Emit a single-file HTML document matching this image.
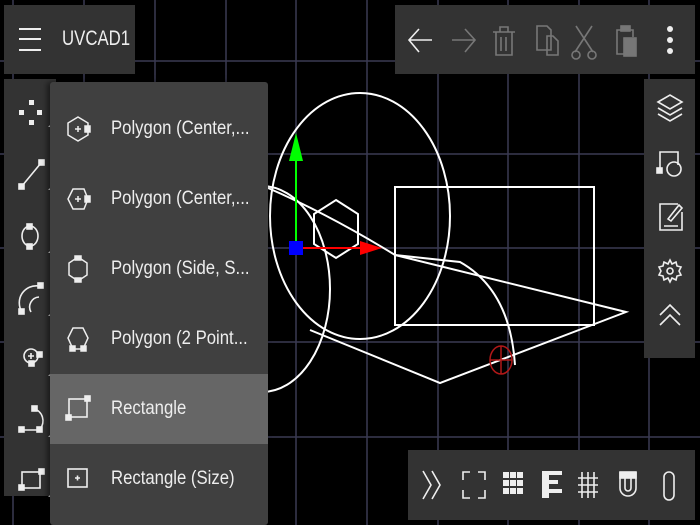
<!DOCTYPE html>
<html><head><style>
body{margin:0;width:700px;height:525px;background:#000;overflow:hidden;position:relative;font-family:"Liberation Sans",sans-serif}
.p{position:absolute;background:#333}
.menu{position:absolute;left:50px;top:82px;width:218px;height:443px;background:#404040;border-radius:3px;box-shadow:-3px 0 6px rgba(0,0,0,.5)}
.it{position:absolute;left:0;width:218px;height:70px;color:#eee;font-size:19px;line-height:70px}
.it span{position:absolute;left:61px;white-space:nowrap;transform:scaleX(.88);transform-origin:left}
.it svg{position:absolute;left:16px;top:22px}
svg{overflow:visible}
</style></head><body>
<svg width="700" height="525" style="position:absolute;left:0;top:0">
<g stroke="#3a3a52" stroke-width="1.5">
<line x1="13" y1="0" x2="13" y2="525"/><line x1="84" y1="0" x2="84" y2="525"/><line x1="155" y1="0" x2="155" y2="525"/><line x1="226" y1="0" x2="226" y2="525"/><line x1="296" y1="0" x2="296" y2="525"/><line x1="367" y1="0" x2="367" y2="525"/><line x1="438" y1="0" x2="438" y2="525"/><line x1="508" y1="0" x2="508" y2="525"/><line x1="579" y1="0" x2="579" y2="525"/><line x1="649" y1="0" x2="649" y2="525"/>
<line x1="0" y1="61" x2="700" y2="61"/><line x1="0" y1="154" x2="700" y2="154"/><line x1="0" y1="248" x2="700" y2="248"/><line x1="0" y1="342" x2="700" y2="342"/><line x1="0" y1="437" x2="700" y2="437"/>
</g>
<g stroke="#fff" stroke-width="2" fill="none">
<ellipse cx="360" cy="216" rx="90" ry="123"/>
<path d="M262 186 A68 103 0 0 1 262 392"/>
<path d="M268 188 Q330 215 395 255 L460 262 Q510 290 515 365"/>
<path d="M395 255 L626 312 L440 383 L310 330"/>
<rect x="395" y="187" width="199" height="138"/>
<polygon points="336,200 358,214 358,244 336,258 314,244 314,214"/>
</g>
<line x1="296" y1="248" x2="296" y2="150" stroke="#0f0" stroke-width="2"/>
<polygon points="296,133 289,161 303,161" fill="#0f0"/>
<line x1="296" y1="248" x2="365" y2="248" stroke="#f00" stroke-width="2"/>
<polygon points="382,248 360,241 360,255" fill="#f00"/>
<rect x="289" y="241" width="14" height="14" fill="#00f"/>
<g stroke="#b01818" stroke-width="1.5" fill="none"><ellipse cx="501" cy="360" rx="11" ry="14"/><line x1="490" y1="360" x2="512" y2="360"/><line x1="501" y1="346" x2="501" y2="374"/></g>
</svg>

<div class="p" style="left:4px;top:5px;width:131px;height:69px"></div>
<svg style="position:absolute;left:19px;top:28px" width="22" height="24"><g stroke="#eee" stroke-width="2"><line x1="0" y1="1" x2="22" y2="1"/><line x1="0" y1="11" x2="22" y2="11"/><line x1="0" y1="22" x2="22" y2="22"/></g></svg>
<div style="position:absolute;left:62px;top:27px;color:#eee;font-size:21px;transform:scaleX(.8);transform-origin:left">UVCAD1</div>

<div class="p" style="left:395px;top:5px;width:300px;height:69px"></div>
<svg style="position:absolute;left:395px;top:5px" width="300" height="69" fill="none" stroke-width="1.6">
<g stroke="#eee"><path d="M14 35 H37 M24 24 L14 35 L24 47"/></g>
<g stroke="#777"><path d="M57 35 H80 M70 24 L80 35 L70 47"/>
<path d="M98 27 H120 M105 27 V22 H113 V27 M101 27 V50 H117 V27 M106 32 V46 M111 32 V46"/>
<path d="M142 21 H152 L156 25 V45 H142 Z M152 31 H158 L163 36 V50 H152 Z"/>
<path d="M181 21 L198 47 M197 21 L180 47"/><circle cx="181" cy="50" r="4"/><circle cx="197" cy="50" r="4"/>
<path d="M227 25 H222 V49 H229 M232 25 H238 V32"/><rect x="226" y="21" width="9" height="5" fill="#777"/><rect x="229" y="33" width="12" height="18" fill="#777"/></g>
<g fill="#eee" stroke="none"><circle cx="275" cy="24" r="3"/><circle cx="275" cy="35" r="3"/><circle cx="275" cy="46" r="3"/></g>
</svg>

<div class="p" style="left:4px;top:79px;width:52px;height:417px"></div>
<svg style="position:absolute;left:4px;top:79px" width="52" height="417" fill="none" stroke="#eee" stroke-width="1.6">
<g fill="#eee" stroke="none"><rect x="25" y="21" width="5" height="5"/><rect x="15" y="31" width="5" height="5"/><rect x="33" y="31" width="5" height="5"/><rect x="25" y="41" width="5" height="5"/>
<polygon points="44,48 48,44 48,48"/><polygon points="44,111 48,107 48,111"/><polygon points="44,174 48,170 48,174"/><polygon points="44,237 48,233 48,237"/><polygon points="44,297 48,293 48,297"/><polygon points="44,358 48,354 48,358"/><polygon points="44,418 48,414 48,418"/></g>
<path d="M18 107 L37 84"/><rect x="15" y="105" width="5" height="5" fill="#eee"/><rect x="35" y="81" width="5" height="5" fill="#eee"/>
<ellipse cx="26" cy="157" rx="8" ry="10"/><rect x="23" y="145" width="5" height="5" fill="#eee"/><rect x="23" y="165" width="5" height="5" fill="#eee"/>
<path d="M18 233 A17 17 0 0 1 35 207 M27 233 A10 10 0 0 1 35 218"/><rect x="15" y="230" width="5" height="5" fill="#eee"/><rect x="34" y="204" width="5" height="5" fill="#eee"/>
<circle cx="27" cy="277" r="7"/><path d="M24 277 H30 M27 274 V280"/><rect x="25" y="282" width="5" height="5" fill="#eee"/><rect x="33" y="273" width="5" height="5" fill="#eee"/>
<path d="M30 330 A11 12 0 0 1 36 350 M20 351 H34"/><rect x="15" y="348" width="5" height="5" fill="#eee"/><rect x="33" y="348" width="5" height="5" fill="#eee"/><rect x="28" y="327" width="5" height="5" fill="#eee"/>
<rect x="18" y="393" width="18" height="16"/><rect x="15" y="406" width="5" height="5" fill="#eee"/><rect x="35" y="390" width="5" height="5" fill="#eee"/>
</svg>

<div class="menu">
<div class="it" style="top:12px"><svg width="24" height="26" fill="none" stroke="#eee" stroke-width="1.5"><polygon points="12,1 22,7 22,19 12,25 2,19 2,7"/><path d="M9 13 H15 M12 10 V16"/><rect x="19" y="10" width="5" height="6" fill="#eee"/></svg><span>Polygon (Center,...</span></div>
<div class="it" style="top:82px"><svg width="24" height="26" fill="none" stroke="#eee" stroke-width="1.5"><polygon points="2,13 7,3 18,3 22,13 18,23 7,23"/><path d="M9 13 H15 M12 10 V16"/><rect x="19" y="10" width="5" height="6" fill="#eee"/></svg><span>Polygon (Center,...</span></div>
<div class="it" style="top:152px"><svg width="24" height="26" fill="none" stroke="#eee" stroke-width="1.5"><polygon points="12,1 21,7 21,19 12,25 3,19 3,7"/><rect x="9" y="0" width="6" height="4" fill="#eee"/><rect x="9" y="22" width="6" height="4" fill="#eee"/></svg><span>Polygon (Side, S...</span></div>
<div class="it" style="top:222px"><svg width="24" height="26" fill="none" stroke="#eee" stroke-width="1.5"><polygon points="7,2 17,2 22,12 17,23 7,23 2,12"/><rect x="4" y="20" width="5" height="5" fill="#eee"/><rect x="15" y="20" width="5" height="5" fill="#eee"/></svg><span>Polygon (2 Point...</span></div>
<div class="it" style="top:292px;background:#666"><svg width="24" height="26" fill="none" stroke="#eee" stroke-width="1.6"><rect x="3" y="3" width="18" height="18"/><rect x="0" y="19" width="5" height="5" fill="#eee"/><rect x="19" y="0" width="5" height="5" fill="#eee"/></svg><span>Rectangle</span></div>
<div class="it" style="top:362px"><svg width="24" height="26" fill="none" stroke="#eee" stroke-width="1.6"><rect x="2" y="3" width="19" height="18"/><path d="M9 12 H14 M11.5 9.5 V14.5"/></svg><span>Rectangle (Size)</span></div>
</div>

<div class="p" style="left:644px;top:79px;width:51px;height:279px"></div>
<svg style="position:absolute;left:644px;top:79px" width="51" height="279" fill="none" stroke="#eee" stroke-width="1.6">
<path d="M14 23 L26 16 L38 23 L26 30 Z M14 29 L26 36 L38 29 M14 35 L26 42 L38 35"/>
<path d="M16 90 V73 H34 V86"/><circle cx="30" cy="90" r="7"/><rect x="13" y="89" width="5" height="5" fill="#eee"/>
<path d="M34 125 H16 V151 H38 V133 M20 147 H34 M24 140 L35 126 L38 129 L27 142 Z"/>
<circle cx="26" cy="192" r="3"/><path d="M26 181 L28 185 L32 183 L33 187 L37 188 L35 192 L37 196 L33 197 L32 201 L28 199 L26 203 L24 199 L20 201 L19 197 L15 196 L17 192 L15 188 L19 187 L20 183 L24 185 Z"/>
<path d="M16 236 L26 226 L36 236 M16 246 L26 236 L36 246"/>
</svg>

<div class="p" style="left:408px;top:450px;width:287px;height:70px"></div>
<svg style="position:absolute;left:408px;top:450px" width="287" height="70" fill="none" stroke="#eee" stroke-width="1.6">
<path d="M15 21 L23 35 L15 49 M24 21 L32 35 L24 49"/>
<path d="M62 22 H55 V30 M70 22 H77 V30 M62 48 H55 V40 M70 48 H77 V40"/>
<g fill="#eee" stroke="none"><rect x="95" y="22" width="6" height="6"/><rect x="102" y="22" width="6" height="6"/><rect x="109" y="22" width="6" height="6"/><rect x="95" y="30" width="6" height="6"/><rect x="102" y="30" width="6" height="6"/><rect x="109" y="30" width="6" height="6"/><rect x="95" y="38" width="6" height="6"/><rect x="102" y="38" width="6" height="6"/><rect x="109" y="38" width="6" height="6"/>
<rect x="134" y="21" width="7" height="27"/><rect x="134" y="21" width="20" height="4"/><rect x="134" y="30" width="16" height="4"/><rect x="134" y="39" width="20" height="4"/></g>
<path d="M174 22 V48 M180 22 V48 M186 22 V48 M170 28 H190 M170 35 H190 M170 42 H190"/>
<path d="M212 22 V38 A8 8 0 0 0 228 38 V22 M217 22 V38 A3 3 0 0 0 223 38 V22"/><rect x="212" y="22" width="16" height="6" fill="#eee"/>
<rect x="256" y="22" width="10" height="28" rx="5"/>
</svg>
</body></html>
